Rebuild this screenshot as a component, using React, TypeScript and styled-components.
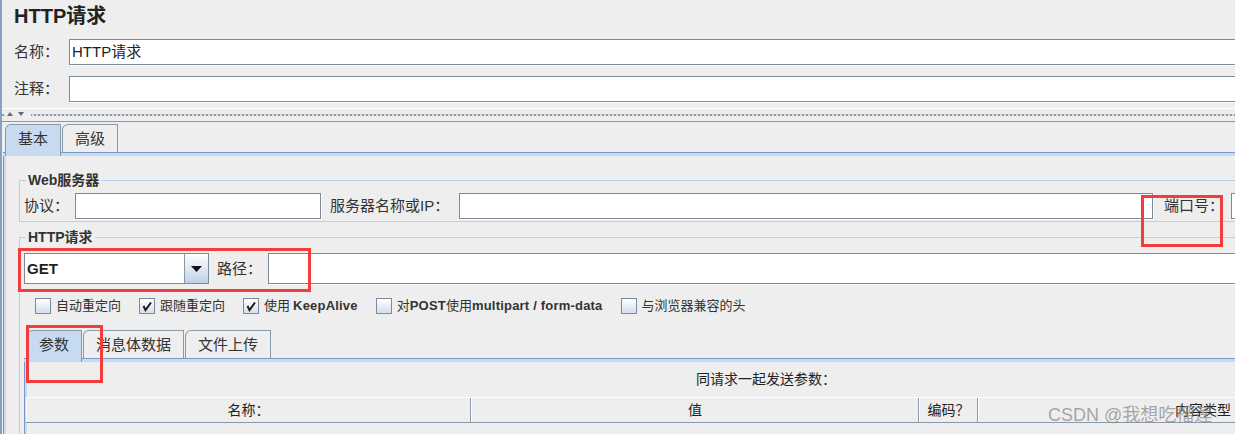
import React from "react";
import styled, { createGlobalStyle } from "styled-components";

const GlobalStyle = createGlobalStyle`
  html, body {
    margin: 0;
    padding: 0;
    overflow: hidden;
    background: #eeeeee;
  }
`;

const FONT = `"Liberation Sans", "Noto Sans CJK SC", sans-serif`;

const Page = styled.div`
  position: relative;
  width: 1520px;
  height: 434px;
  box-sizing: border-box;
  background: #eeeeee;
  border-left: 2px solid #8aa0c0;
  font-family: ${FONT};
  color: #333;
  overflow: hidden;
`;

const Header = styled.div`
  padding: 4px 0 0 12px;
`;

const Title = styled.h1`
  margin: 0;
  font-size: 20px;
  line-height: 24px;
  font-weight: bold;
  color: #222;
`;

const FormRow = styled.div`
  display: flex;
  align-items: center;
  margin-top: 11px;
`;

const Label = styled.span<{ $w: number; $ml?: number }>`
  flex: 0 0 ${(p) => p.$w}px;
  margin-left: ${(p) => p.$ml ?? 0}px;
  font-size: 15px;
  line-height: 20px;
  color: #333;
  white-space: nowrap;
`;

const TextField = styled.div<{ $w?: number; $h?: number }>`
  box-sizing: border-box;
  flex: ${(p) => (p.$w ? `0 0 ${p.$w}px` : "1 1 auto")};
  height: ${(p) => p.$h ?? 26}px;
  background: #ffffff;
  border: 1px solid #7d8b98;
  box-shadow: 1px 1px 0 #ffffff;
  padding-left: 2px;
  font-size: 15px;
  line-height: ${(p) => (p.$h ?? 26) - 2}px;
  color: #222;
  white-space: nowrap;
`;

const Splitter = styled.div`
  margin-top: 5px;
  height: 14px;
  border-bottom: 1px solid #8a99a8;
  position: relative;
  background:
    linear-gradient(#ffffff, #ffffff) 0 1px / 100% 1px no-repeat,
    repeating-linear-gradient(90deg, #8e9aa6 0 2px, #d4d8dc 2px 4px) 0 7px / 100% 2px no-repeat;
`;

const SplitArrows = styled.svg`
  position: absolute;
  left: 3px;
  top: 3px;
  background: #eeeeee;
`;

const TabPane = styled.div<{ $w?: number }>`
  margin-left: ${(p) => (p.$w ? 0 : 1)}px;
  width: ${(p) => (p.$w ? `${p.$w}px` : "auto")};
`;

const TabStrip = styled.div<{ $top: number }>`
  display: flex;
  align-items: flex-end;
  padding-left: 2px;
  margin-top: ${(p) => p.$top}px;
  height: 28px;
`;

const Tab = styled.div<{ $active?: boolean }>`
  box-sizing: border-box;
  position: relative;
  z-index: ${(p) => (p.$active ? 2 : 0)};
  height: ${(p) => (p.$active ? 32 : 28)}px;
  margin-bottom: ${(p) => (p.$active ? -4 : 0)}px;
  margin-right: 1px;
  padding: 4px 12px 0;
  border: 1px solid #8a99a8;
  border-bottom: none;
  border-top-left-radius: 6px;
  background: ${(p) => (p.$active ? "#c8daf0" : "#eeeeee")};
  font-size: 15px;
  line-height: 20px;
  color: #333;
  white-space: nowrap;
`;

const TabBody = styled.div<{ $pad: string }>`
  position: relative;
  padding: ${(p) => p.$pad};
  box-shadow:
    inset 0 1px 0 #7897cb,
    inset 0 4px 0 #c8daf0,
    inset 1px 0 0 #7897cb,
    inset 3px 0 0 #c8daf0;
`;

const Group = styled.div<{ $top: number; $pad: string }>`
  position: relative;
  margin-top: ${(p) => p.$top}px;
  border: 1px solid #b8cfe5;
  padding: ${(p) => p.$pad};
`;

const GroupTitle = styled.span`
  position: absolute;
  top: -10px;
  left: 6px;
  padding: 0 2px;
  background: #eeeeee;
  font-size: 14px;
  line-height: 18px;
  font-weight: bold;
  color: #333;
`;

const Row = styled.div`
  display: flex;
  align-items: center;
`;

const Combo = styled.div`
  box-sizing: border-box;
  flex: 0 0 185px;
  height: 31px;
  display: flex;
  border: 1px solid #7d8b98;
  background: #ffffff;
`;

const ComboValue = styled.div`
  flex: 1;
  padding-left: 2px;
  font-size: 15px;
  line-height: 29px;
  font-weight: bold;
  color: #222;
`;

const ComboButton = styled.div`
  flex: 0 0 23px;
  display: flex;
  align-items: center;
  justify-content: center;
  border-left: 1px solid #8a99a8;
  background: linear-gradient(#ffffff, #bfd1e6);
`;

const CheckRow = styled.div`
  display: flex;
  align-items: center;
  margin: 14px 0 0 11px;
  height: 16px;
`;

const CheckItem = styled.label`
  display: flex;
  align-items: center;
  margin-right: 18px;
  font-size: 13px;
  line-height: 16px;
  color: #333;
  white-space: nowrap;
`;

const Box = styled.span`
  box-sizing: border-box;
  width: 16px;
  height: 16px;
  margin-right: 5px;
  border: 1px solid #7a8a9a;
  background: linear-gradient(#ffffff, #d3dfec);
  display: flex;
  align-items: center;
  justify-content: center;
`;

const Latin = styled.span<{ $gap?: number }>`
  font-weight: bold;
  letter-spacing: 0.2px;
  margin-left: ${(p) => p.$gap ?? 0}px;
`;

const Caption = styled.div`
  padding-top: 8px;
  text-align: center;
  font-size: 14px;
  line-height: 18px;
  color: #222;
`;

const TableHead = styled.div`
  display: flex;
  margin: 9px 0 0 2px;
  height: 26px;
  box-sizing: border-box;
  border-top: 1px solid #ffffff;
  border-bottom: 1px solid #8a99a8;
`;

const HeadCell = styled.div<{ $w: number }>`
  box-sizing: border-box;
  flex: 0 0 ${(p) => p.$w}px;
  border-right: 1px solid #8a99a8;
  border-left: 1px solid #ffffff;
  text-align: center;
  font-size: 14px;
  line-height: 24px;
  color: #222;
`;

const Mark = styled.div<{ $x: number; $y: number; $w: number; $h: number }>`
  position: absolute;
  left: ${(p) => p.$x - 2}px;
  top: ${(p) => p.$y}px;
  width: ${(p) => p.$w}px;
  height: ${(p) => p.$h}px;
  box-sizing: border-box;
  border: 3px solid #f53c3c;
  z-index: 5;
`;

const Watermark = styled.div`
  position: absolute;
  left: 1046px;
  top: 403px;
  font-size: 18px;
  line-height: 24px;
  color: rgba(140, 140, 140, 0.75);
  z-index: 6;
  white-space: nowrap;
`;

const Check = () => (
  <svg width="12" height="12" viewBox="0 0 12 12">
    <path d="M2.5 6 L4.5 10 L10 2.5" fill="none" stroke="#1a1a1a" strokeWidth="2" />
  </svg>
);

const checks: { text: React.ReactNode; on?: boolean }[] = [
  { text: "自动重定向" },
  { text: "跟随重定向", on: true },
  { text: <>使用<Latin $gap={3}>KeepAlive</Latin></>, on: true },
  { text: <>对<Latin>POST</Latin>使用<Latin>multipart / form-data</Latin></> },
  { text: "与浏览器兼容的头" },
];

export default function App() {
  return (
    <>
      <GlobalStyle />
      <Page>
        <Header>
          <Title>HTTP请求</Title>
          <FormRow>
            <Label $w={55}>名称：</Label>
            <TextField>HTTP请求</TextField>
          </FormRow>
          <FormRow>
            <Label $w={55}>注释：</Label>
            <TextField />
          </FormRow>
        </Header>

        <Splitter>
          <SplitArrows width="26" height="8" viewBox="0 0 26 8">
            <path d="M2 6 L5 2 L8 6 Z" fill="#5d6b78" />
            <path d="M13 2 L19 2 L16 6 Z" fill="#5d6b78" />
          </SplitArrows>
        </Splitter>

        <TabPane>
          <TabStrip $top={2}>
            <Tab $active>基本</Tab>
            <Tab>高级</Tab>
          </TabStrip>
          <TabBody $pad="4px 0 40px 16px">
            <Group $top={24} $pad="12px 4px 2px">
              <GroupTitle>Web服务器</GroupTitle>
              <Row>
                <Label $w={51}>协议：</Label>
                <TextField $w={246} />
                <Label $w={129} $ml={9}>服务器名称或IP：</Label>
                <TextField $w={694} />
                <Label $w={67} $ml={11}>端口号：</Label>
                <TextField />
              </Row>
            </Group>

            <Group $top={15} $pad="15px 4px 0">
              <GroupTitle>HTTP请求</GroupTitle>
              <Row>
                <Combo>
                  <ComboValue>GET</ComboValue>
                  <ComboButton>
                    <svg width="11" height="6" viewBox="0 0 11 6">
                      <path d="M0 0 L11 0 L5.5 6 Z" fill="#111" />
                    </svg>
                  </ComboButton>
                </Combo>
                <Label $w={51} $ml={8}>路径：</Label>
                <TextField $h={31} />
              </Row>

              <CheckRow>
                {checks.map((c, i) => (
                  <CheckItem key={i}>
                    <Box>{c.on && <Check />}</Box>
                    {c.text}
                  </CheckItem>
                ))}
              </CheckRow>

              <TabPane $w={1484}>
                <TabStrip $top={16}>
                  <Tab $active>参数</Tab>
                  <Tab>消息体数据</Tab>
                  <Tab>文件上传</Tab>
                </TabStrip>
                <TabBody $pad="4px 0 20px 0">
                  <Caption>同请求一起发送参数：</Caption>
                  <TableHead>
                    <HeadCell $w={445}>名称：</HeadCell>
                    <HeadCell $w={448}>值</HeadCell>
                    <HeadCell $w={59}>编码？</HeadCell>
                    <HeadCell $w={450}>内容类型</HeadCell>
                  </TableHead>
                </TabBody>
              </TabPane>
            </Group>
          </TabBody>
        </TabPane>

        <Mark $x={18} $y={248} $w={293} $h={44} />
        <Mark $x={1141} $y={195} $w={82} $h={52} />
        <Mark $x={26} $y={325} $w={77} $h={58} />
        <Watermark>CSDN @我想吃榴莲</Watermark>
      </Page>
    </>
  );
}
